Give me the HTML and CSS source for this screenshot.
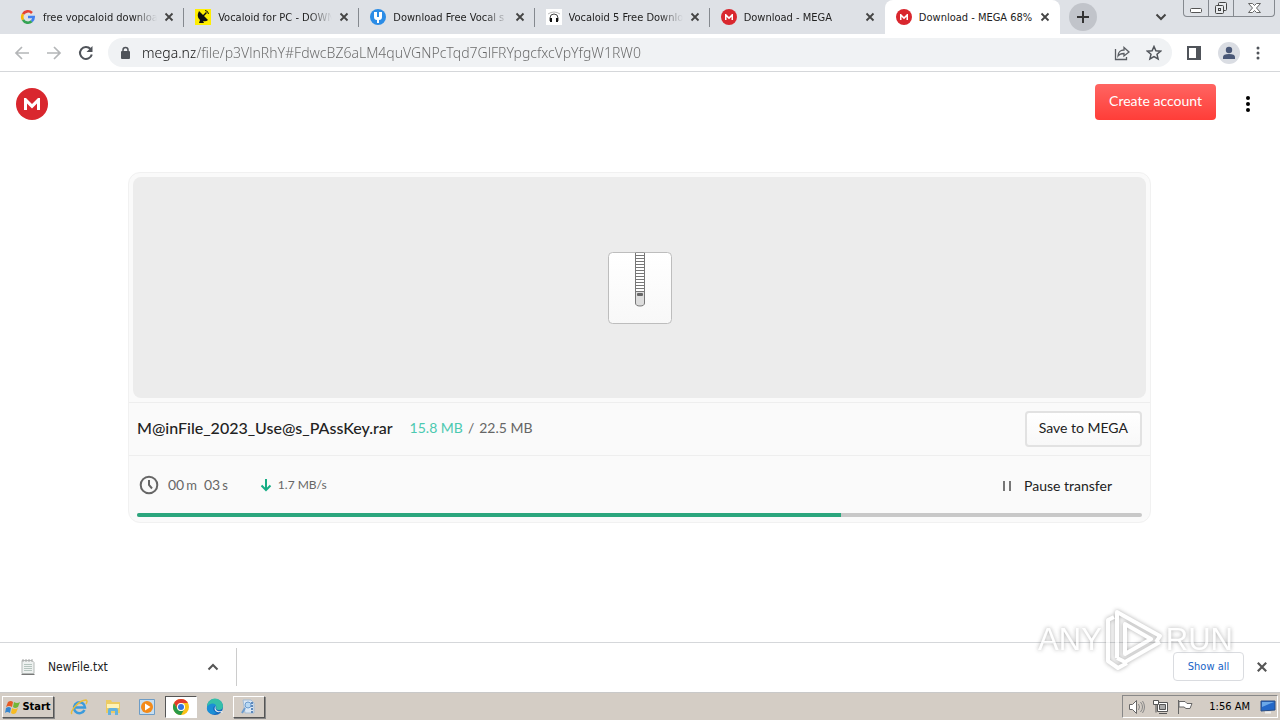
FILE: index.html
```html
<!DOCTYPE html>
<html lang="en">
<head>
<meta charset="utf-8">
<title>Download - MEGA 68%</title>
<link rel="stylesheet" href="styles.css">
</head>
<body>
<svg class="defs" aria-hidden="true">
  <symbol id="x" viewBox="0 0 10 10"><path d="M1.500 1.500l7 7M8.500 1.500l-7 7" fill="none" stroke="currentColor" stroke-width="1.800"/></symbol>
  <symbol id="mega" viewBox="0 0 32 32"><circle cx="16" cy="16" r="16" fill="#d9272e"/><path d="M8 22V10h2l6 6 6-6h2v12h-3v-6.500l-5 5-5-5V22z" fill="#fff"/></symbol>
  <symbol id="chrome" viewBox="0 0 16 16"><circle cx="8" cy="8" r="8" fill="#fbc116"/><path d="M1.070 4A8 8 0 0 1 14.930 4H8a4 4 0 0 0-3.460 6z" fill="#e33b2e"/><path d="M1.070 4A8 8 0 0 0 8 16l3.460-6A4 4 0 0 1 4.540 10z" fill="#2a9a48"/><circle cx="8" cy="8" r="4" fill="#fff"/><circle cx="8" cy="8" r="3" fill="#3474e0"/></symbol>
</svg>

<header class="tabstrip">
  <div class="tabs">
    <div class="tab">
      <svg class="fav" viewBox="0 0 16 16" fill="none" stroke-width="2.600"><path d="M3 5.200A5.700 5.700 0 0 1 12 4" stroke="#e54335"/><path d="M3 5.200a5.700 5.700 0 0 0 0 5.600" stroke="#f6b704"/><path d="M3 10.800a5.700 5.700 0 0 0 8.700 1.500" stroke="#34a353"/><path d="M11.700 12.300A5.700 5.700 0 0 0 13.700 8H8" stroke="#4280ef"/></svg>
      <button class="title">free vopcaloid downloa</button><button class="close" aria-label="Close tab"><svg><use href="#x"/></svg></button>
    </div>
    <div class="tab">
      <svg class="fav" viewBox="0 0 16 16"><path fill="#ffee00" d="M0 0h16v16H0z"/><path d="M4 2q-3 6 1 9l-1 3h5l-1-2q3 1 5-1L9 7l3-3-1-1-3 3z" fill="#111"/><path d="M10 1.500q3 0 3.500 3.500" fill="none" stroke="#111"/></svg>
      <button class="title">Vocaloid for PC - DOWN</button><button class="close" aria-label="Close tab"><svg><use href="#x"/></svg></button>
    </div>
    <div class="tab">
      <svg class="fav" viewBox="0 0 16 16"><circle cx="8" cy="8" r="8" fill="#2b8ce6"/><path d="M4 3v5q0 3 3 3v3h2v-3q3 0 3-3V3h-3v5H7V3z" fill="#fff"/></svg>
      <button class="title">Download Free Vocal s</button><button class="close" aria-label="Close tab"><svg><use href="#x"/></svg></button>
    </div>
    <div class="tab">
      <svg class="fav" viewBox="0 0 16 16"><path fill="#fff" d="M0 0h16v16H0z"/><path d="M2 5q6-4 12 0" stroke="#bbb" fill="none"/><path d="M4 12V9a4 4 0 0 1 8 0v3" fill="none" stroke="#444"/><path d="M4 9h2v4H4zM10 9h2v4h-2z" fill="#111"/></svg>
      <button class="title">Vocaloid 5 Free Downlo</button><button class="close" aria-label="Close tab"><svg><use href="#x"/></svg></button>
    </div>
    <div class="tab">
      <svg class="fav"><use href="#mega"/></svg>
      <button class="title">Download - MEGA</button><button class="close" aria-label="Close tab"><svg><use href="#x"/></svg></button>
    </div>
    <div class="tab active">
      <svg class="fav"><use href="#mega"/></svg>
      <button class="title">Download - MEGA 68%</button><button class="close" aria-label="Close tab"><svg><use href="#x"/></svg></button>
    </div>
  </div>
  <button class="newtab" aria-label="New tab"><svg width="14" height="14" viewBox="0 0 14 14"><path d="M7 1v12M1 7h12" stroke="#333" stroke-width="2"/></svg></button>
  <button class="tabsearch" aria-label="Search tabs"><svg width="12" height="8" viewBox="0 0 12 8"><path d="M1.500 1.500L6 6l4.500-4.500" fill="none" stroke="#444" stroke-width="2"/></svg></button>
  <div class="winbtns">
    <button aria-label="Minimize"><svg width="24" height="16" viewBox="0 0 24 16"><rect x="6.500" y="8.500" width="11" height="4" rx="1" fill="#fff" stroke="#555"/></svg></button>
    <button aria-label="Restore"><svg width="24" height="16" viewBox="0 0 24 16"><g fill="#e8eaed" stroke="#444"><rect x="9.500" y="2.500" width="8" height="8" rx="1"/><rect x="6.500" y="5.500" width="8" height="8" rx="1"/><rect x="9.500" y="8.500" width="2" height="2"/></g></svg></button>
    <button aria-label="Close window"><svg width="40" height="16" viewBox="0 0 40 16"><path d="M14.500 3.500h4l2 2 2-2h4L22.500 8l4 4.500h-4l-2-2-2 2h-4l4-4.500z" fill="#fff" stroke="#666"/></svg></button>
  </div>
</header>

<nav class="toolbar">
  <button aria-label="Back"><svg width="16" height="16" viewBox="0 0 16 16"><path d="M15 8H2M8 2L2 8l6 6" fill="none" stroke="#b4b6b8" stroke-width="1.700"/></svg></button>
  <button aria-label="Forward"><svg width="16" height="16" viewBox="0 0 16 16"><path d="M1 8h13M8 2l6 6-6 6" fill="none" stroke="#b4b6b8" stroke-width="1.700"/></svg></button>
  <button aria-label="Reload"><svg width="16" height="16" viewBox="0 0 16 16"><path d="M13.800 9.500A6 6 0 1 1 12.500 4" fill="none" stroke="#50545a" stroke-width="2"/><path d="M14.500 1v6H8.500z" fill="#50545a"/></svg></button>
  <div class="omnibox">
    <svg width="11" height="14" viewBox="0 0 11 14"><path d="M3 6V4a2.500 2.500 0 0 1 5 0v2" fill="none" stroke="#50545a" stroke-width="1.500"/><rect x="1" y="5" width="9" height="8" rx="1" fill="#50545a"/></svg>
    <input class="url" aria-label="Address" value="mega.nz/file/p3VlnRhY#FdwcBZ6aLM4quVGNPcTqd7GlFRYpgcfxcVpYfgW1RW0">
    <button aria-label="Share"><svg width="16" height="16" viewBox="0 0 16 16" fill="none" stroke="#5a5e63" stroke-width="1.300"><path d="M1.500 4v10.500h11V12M4 11c0-4 3-6 6-6V2.500L15 7l-5 4V8.500c-3 0-5 1-6 2.500z"/></svg></button>
    <button aria-label="Bookmark"><svg width="16" height="16" viewBox="0 0 16 16"><path d="M8 1.500l1.900 4.300 4.700.4-3.600 3.100 1.100 4.600L8 11.500l-4.100 2.400L5 9.300 1.400 6.200l4.700-.4z" fill="none" stroke="#50545a" stroke-width="1.500"/></svg></button>
  </div>
  <button aria-label="Side panel"><svg width="16" height="16" viewBox="0 0 16 16"><path d="M2 2h12v12H2z" fill="none" stroke="#50545a" stroke-width="2"/><path d="M10 1h5v14h-5z" fill="#50545a"/></svg></button>
  <button aria-label="Profile"><svg width="22" height="22" viewBox="0 0 22 22"><circle cx="11" cy="11" r="11" fill="#dadde3"/><circle cx="11" cy="8" r="3.200" fill="#4a5877"/><path d="M5 17v-2q0-3 6-3t6 3v2z" fill="#4a5877"/></svg></button>
  <button aria-label="Menu"><svg width="4" height="16" viewBox="0 0 4 16" fill="#50545a"><circle cx="2" cy="3" r="1.500"/><circle cx="2" cy="8" r="1.500"/><circle cx="2" cy="13" r="1.500"/></svg></button>
</nav>

<main class="page">
  <div class="top">
    <a href="#" aria-label="MEGA"><svg class="logo"><use href="#mega"/></svg></a>
    <button class="create">Create account</button>
    <button class="dots" aria-label="More"><svg width="4" height="16" viewBox="0 0 4 16"><circle cx="2" cy="2" r="2"/><circle cx="2" cy="8" r="2"/><circle cx="2" cy="14" r="2"/></svg></button>
  </div>
  <section class="card">
    <div class="preview">
      <svg width="66" height="76" viewBox="0 0 66 76"><defs><linearGradient id="paper" x2="0" y2="1"><stop offset="0" stop-color="#fff"/><stop offset="1" stop-color="#f8f8f8"/></linearGradient></defs>
        <rect x="1.500" y="2.500" width="63" height="71" rx="4" fill="url(#paper)" stroke="#bdbdbd"/>
        <path d="M28.500 3h9v50q0 3-4.500 3t-4.500-3z" fill="#ddd" stroke="#777"/><path d="M29 3h8v38h-8z" fill="#fff"/>
        <path d="M29 5.500h8M29 8.500h8M29 11.500h8M29 14.500h8M29 17.500h8M29 20.500h8M29 23.500h8M29 26.500h8M29 29.500h8M29 32.500h8M29 35.500h8M29 38.500h8M29 41.500h8" stroke="#777"/><rect x="30" y="43" width="6" height="3" rx="1" fill="#666"/></svg>
    </div>
    <div class="row file">
      <h1>M@inFile_2023_Use@s_PAssKey.rar</h1>
      <p><span class="loaded">15.8 MB</span><span>/</span><span>22.5 MB</span></p>
      <button class="save">Save to MEGA</button>
    </div>
    <div class="row transfer">
      <svg width="20" height="20" viewBox="0 0 20 20"><g fill="none" stroke="#666" stroke-width="2"><circle cx="10" cy="10" r="8.300"/><path d="M10 5v5l3 3.500"/></g></svg>
      <span class="time"><span>00<small>m</small></span><span>03<small>s</small></span></span>
      <svg width="12" height="14" viewBox="0 0 12 14"><path d="M6 1v11M1.500 7.500L6 12l4.500-4.500" fill="none" stroke="#17ad85" stroke-width="2"/></svg>
      <span class="speed">1.7 MB/s</span>
      <button class="pause"><svg width="10" height="12" viewBox="0 0 10 12"><path d="M2 1v10M8 1v10" stroke="#777" stroke-width="2"/></svg>Pause transfer</button>
    </div>
    <progress max="100" value="70" aria-label="Download progress"></progress>
  </section>
</main>

<footer class="shelf">
  <div class="download">
    <svg width="16" height="18" viewBox="0 0 16 18"><path d="M2 2.500h10l2 2v11H2z" fill="#eef1f0" stroke="#b4b9b7"/><path d="M3 1v3M6 1v3M9 1v3M12 1v3" stroke="#aaa"/><path d="M4 6.500h8M4 8.500h8M4 10.500h8M4 12.500h8" stroke="#b5c4be"/><path d="M1.500 16.500h13" stroke="#777"/></svg>
    <span>NewFile.txt</span>
    <button aria-label="Download options"><svg width="12" height="8" viewBox="0 0 12 8"><path d="M1.500 6.500L6 2l4.500 4.500" fill="none" stroke="#555" stroke-width="2"/></svg></button>
  </div>
  <button class="showall">Show all</button>
  <button class="shelfclose" aria-label="Close"><svg width="12" height="12"><use href="#x"/></svg></button>
  <div class="watermark"><span>ANY</span><svg width="58" height="64" viewBox="0 0 58 64" fill="none" stroke="#fff" stroke-width="4" stroke-linejoin="round"><path d="M9 9L3 12v41l10 7 9-5M12 50V4l43 24-4 6M12 50l8 4 35-20M20 16v30l26-15z"/></svg><span>RUN</span></div>
</footer>

<div class="taskbar">
  <button class="start"><svg width="16" height="16" viewBox="0 0 16 16"><path d="M3 3q3-2 5 0L7 8Q4 6 1 8z" fill="#e65a24"/><path d="M9 3q3 2 6 0l-2 5q-3 2-5 0z" fill="#72b637"/><path d="M1 9q3-2 5 0l-1 5q-3-2-5 0z" fill="#3586d0"/><path d="M7 9q3 2 6 0l-2 5q-3 2-5 0z" fill="#f7bb22"/></svg>Start</button>
  <button class="task" aria-label="Internet Explorer"><svg width="18" height="18" viewBox="0 0 18 18"><path d="M14.500 12A5.500 5.500 0 1 1 15 9.500H5" fill="none" stroke="#3b9bdc" stroke-width="2.500"/><path d="M2 16C-1 14 9 2 16 2q2 1 0 4" fill="none" stroke="#e9bd3a" stroke-width="1.500"/></svg></button>
  <button class="task" aria-label="Explorer"><svg width="18" height="18" viewBox="0 0 18 18"><path d="M2 2h5l1 2h8v11H2z" fill="#eccb62"/><path d="M3 6h12v4H3z" fill="#fff3b5"/><path d="M4 17v-5q0-2 2-2h6q2 0 2 2v5h-3v-4H7v4z" fill="#63b2de"/></svg></button>
  <button class="task" aria-label="Media Player"><svg width="18" height="18" viewBox="0 0 18 18"><path d="M1.500 1.500h15v15h-15z" fill="#c7def0" stroke="#6d9cc6"/><circle cx="9" cy="9" r="6" fill="#f38a19"/><path d="M7 5.500v7L12.500 9z" fill="#fff"/></svg></button>
  <button class="task current" aria-label="Chrome"><svg width="16" height="16"><use href="#chrome"/></svg></button>
  <button class="task" aria-label="Edge"><svg width="18" height="18" viewBox="0 0 18 18"><circle cx="9" cy="9" r="8" fill="#1769bd"/><path d="M1 9a8 8 0 0 1 16-1c0 4-4 5-7 3 2-5-5-6-9-2z" fill="#35bfa9"/><path d="M1 9c3-5 9-4 9-1-4 0-4 5 1 7C5 18 0 14 1 9z" fill="#1b8fd6"/><path d="M10 8c-2 4 2 6 6 5l1 2-3-1c-5 1-7-4-4-6z" fill="#e8eef2"/></svg></button>
  <button class="task open" aria-label="Archive tool"><svg width="18" height="18" viewBox="0 0 18 18"><path d="M3 2h8l3 3v10H5z" fill="#dce8f4" stroke="#a5bdd5"/><circle cx="8" cy="7" r="3" fill="#b9d8f2" stroke="#6c9ccf"/><path d="M5 10l-3 5" stroke="#6c9ccf" stroke-width="2"/><path d="M12 4v12" stroke="#5c88bb" stroke-width="2" stroke-dasharray="2 1"/></svg></button>
  <div class="tray">
    <svg width="18" height="16" viewBox="0 0 18 16" fill="#fff" stroke="#666"><path d="M1.500 5.500h3l4-4v13l-4-4h-3z"/><path d="M10.500 5q2 3 0 6M12.500 3q4 5 0 10M14.500 2q4 6 0 12" fill="none" stroke="#888"/></svg>
    <svg width="18" height="16" viewBox="0 0 18 16" fill="#fff" stroke="#555"><path d="M5.500 3.500h10v9h-10z"/><path d="M7.500 5.500h6v5h-6z" fill="#aaa"/><path d="M1.500 1.500h5v4h-5z"/><path d="M4 6v7.500M7 14.500h8" fill="none"/></svg>
    <svg width="18" height="16" viewBox="0 0 18 16" fill="#fff" stroke="#666"><path d="M2.500 1v14M3 2.500h6l2 2h5l-2 5h-4L8 8H3z"/></svg>
    <time>1:56 AM</time>
    <svg width="16" height="14" viewBox="0 0 16 14"><path d="M1 1h14v9l-14 1z" fill="#2468c8" stroke="#2a4d83"/><path d="M2 2h12L2 7z" fill="#6ba8e8"/><path d="M5 12.500h6" stroke="#eee" stroke-width="2"/></svg>
  </div>
</div>
</body>
</html>
```
FILE: styles.css
```css
* { box-sizing: border-box; }
body {
  margin: 0;
  min-height: 100vh;
  display: flex;
  flex-direction: column;
  background: #fff;
  color: #222;
  font-family: "DejaVu Sans Condensed", "DejaVu Sans", sans-serif;
  font-size: 11px;
}
button {
  border: 0;
  padding: 0;
  background: none;
  color: inherit;
  font: inherit;
  display: flex;
  align-items: center;
  justify-content: center;
  flex: none;
}
svg { display: block; flex: none; }
.defs { position: absolute; width: 0; height: 0; }

.tabstrip {
  display: flex;
  height: 34px;
  background: #dee1e6;
}
.tabs { display: flex; flex: 0 1 1051px; margin-left: 9px; min-width: 0; }
.tab {
  flex: 1 1 0;
  min-width: 0;
  display: flex;
  align-items: center;
  gap: 7px;
  padding: 0 10px 0 11px;
  background: linear-gradient(#85898f, #85898f) right 8px / 1px 19px no-repeat;
}
.tab:nth-child(5) { background: none; }
.tab.active { background: #fff; border-radius: 8px 8px 0 0; }
.fav { width: 16px; height: 16px; }
.title {
  flex: 1;
  min-width: 0;
  justify-content: flex-start;
  overflow: hidden;
  white-space: nowrap;
  height: 20px;
  mask-image: linear-gradient(90deg, #000 80%, transparent);
}
.active .title { mask-image: none; }
.close svg { width: 10px; height: 10px; color: #444; }
.newtab {
  width: 28px;
  height: 28px;
  margin: 3px 0 0 9px;
  border-radius: 50%;
  background: #c1c4ca;
}
.tabsearch { width: 24px; margin-left: auto; }
.winbtns {
  display: flex;
  height: 17px;
  margin: 0 5px 0 10px;
  border: 1px solid #85898f;
  border-top: 0;
  border-radius: 0 0 4px 4px;
}
.winbtns button + button { border-left: 1px solid #85898f; }

.toolbar {
  display: flex;
  align-items: center;
  gap: 16px;
  height: 38px;
  padding: 0 20px 0 14px;
  border-bottom: 1px solid #d5d7da;
}
.omnibox {
  flex: 1;
  min-width: 0;
  display: flex;
  align-items: center;
  gap: 16px;
  height: 29px;
  padding: 0 10px 0 12px;
  margin: 0 -2px;
  border-radius: 15px;
  background: #f0f2f4;
}
.url {
  flex: 1;
  min-width: 0;
  margin-left: -5px;
  padding: 0;
  border: 0;
  font-family: "Noto Sans", sans-serif;
  font-size: 14px;
  font-weight: 300;
  color: transparent;
  background: linear-gradient(90deg, #111 53px, #666 53px);
  background-clip: text;
  -webkit-background-clip: text;
}

.page { flex: 1; font-family: Lato, sans-serif; }
.top {
  display: flex;
  align-items: center;
  height: 64px;
  padding: 0 16px;
}
.logo { width: 32px; height: 32px; }
.create {
  margin-left: auto;
  height: 36px;
  padding: 0 14px 3px;
  margin-bottom: 4px;
  border-radius: 4px;
  background: linear-gradient(#ff6562, #ff3d38);
  color: #fff;
  font-size: 14px;
}
.dots { width: 32px; height: 32px; margin-left: 16px; }
.card {
  margin: 36px 129px 0 128px;
  border: 1px solid #f1f1f1;
  border-radius: 12px;
  background: #fafafa;
  padding-bottom: 5px;
}
.preview {
  display: flex;
  align-items: center;
  justify-content: center;
  height: 221px;
  margin: 4px;
  border-radius: 8px;
  background: #ececec;
}
.row {
  display: flex;
  align-items: center;
  border-top: 1px solid #eee;
  padding: 0 8px;
}
.file { height: 53px; }
h1 { margin: 0; padding-bottom: 3px; font-size: 16px; font-weight: 500; color: #222; }
.file p { display: flex; gap: 5px; margin: 0 0 0 17px; padding-bottom: 3px; font-size: 14px; color: #666; }
.loaded { color: #4cc9b0; }
.save {
  margin-left: auto;
  height: 36px;
  padding: 0 12px 3px;
  border: 2px solid #e2e2e2;
  border-radius: 4px;
  background: linear-gradient(#fff, #f8f8f8);
  font-size: 14px;
}
.transfer { height: 58px; padding-left: 10px; color: #666; }
.time { display: flex; gap: 7px; margin: 0 32px 0 9px; font-size: 14px; }
.time small { margin-left: 2px; font-size: 13px; }
.speed { margin-left: 6px; font-size: 12px; }
.pause { margin-left: auto; margin-right: 30px; padding-top: 2px; gap: 12px; font-size: 14px; color: #222; }
progress {
  display: block;
  appearance: none;
  width: calc(100% - 16px);
  height: 4px;
  margin: 0 8px;
  border: 0;
  border-radius: 2px;
  overflow: hidden;
}
progress::-webkit-progress-bar { background: #c8c8c8; }
progress::-webkit-progress-value { background: #2ba67d; }

.shelf {
  position: relative;
  display: flex;
  align-items: center;
  height: 51px;
  padding: 0 12px 2px 0;
  border-top: 1px solid #d5d7da;
  border-bottom: 1px solid #c9c9c9;
}
.download {
  display: flex;
  align-items: center;
  width: 237px;
  height: 38px;
  padding: 0 17px 0 20px;
  gap: 12px;
  border-right: 1px solid #ccc;
  font-size: 12px;
}
.download button { margin-left: auto; }
.showall {
  width: 71px;
  height: 29px;
  margin-left: auto;
  border: 1px solid #dadce0;
  border-radius: 4px;
  color: #1763c6;
}
.shelfclose { margin-left: 12px; color: #555; }
.watermark {
  position: absolute;
  right: 47px;
  top: -35px;
  display: flex;
  align-items: center;
  gap: 3px;
  color: #fff;
  font-family: "Liberation Sans", sans-serif;
  font-size: 31px;
  filter: drop-shadow(0 0 2px #888);
  opacity: 0.7;
  pointer-events: none;
}

.taskbar {
  display: flex;
  align-items: center;
  height: 27px;
  padding: 0 2px;
  background: #d4cdc5;
  color: #000;
}
.start, .open {
  border: 1px solid;
  border-color: #fff #555 #555 #fff;
  box-shadow: 1px 1px 0 #888;
}
.start { width: 52px; height: 22px; gap: 1px; margin-right: 9px; font-weight: bold; font-size: 11px; }
.task { width: 32px; height: 22px; margin-right: 2px; }
.current { border: 1px solid; border-color: #555 #fff #fff #555; background: #fff; }
.tray {
  display: flex;
  align-items: center;
  gap: 6px;
  height: 23px;
  margin-left: auto;
  padding: 0 1px 0 5px;
  border: 1px solid;
  border-color: #888 #fff #fff #888;
}
.tray time { margin: 0 4px 0 9px; }
```
